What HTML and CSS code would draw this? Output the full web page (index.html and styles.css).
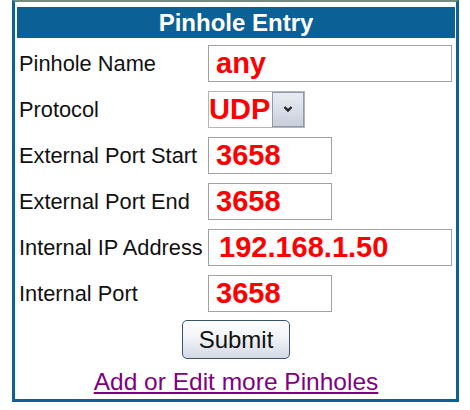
FILE: index.html
```html
<!DOCTYPE html>
<html>
<head>
<meta charset="utf-8">
<link rel="stylesheet" href="styles.css">
</head>
<body>
<div class="panel">
  <div class="header">Pinhole Entry</div>
  <form class="form">
    <label class="label">Pinhole Name</label>
    <div class="field"><input class="input long" type="text" value="any"></div>
    <label class="label">Protocol</label>
    <div class="field">
      <div class="select">
        <span class="select-value">UDP</span>
        <span class="select-btn"><svg width="12" height="8" viewBox="0 0 12 8"><polyline points="2.5,2 6,5.5 9.5,2" fill="none" stroke="#222222" stroke-width="2.4"/></svg></span>
      </div>
    </div>
    <label class="label">External Port Start</label>
    <div class="field"><input class="input short" type="text" value="3658"></div>
    <label class="label">External Port End</label>
    <div class="field"><input class="input short" type="text" value="3658"></div>
    <label class="label">Internal IP Address</label>
    <div class="field"><input class="input long ip" type="text" value="192.168.1.50"></div>
    <label class="label">Internal Port</label>
    <div class="field"><input class="input short" type="text" value="3658"></div>
  </form>
  <div class="actions">
    <button class="submit" type="button">Submit</button>
  </div>
  <div class="link-row"><a class="link" href="#">Add or Edit more Pinholes</a></div>
</div>
</body>
</html>
```
FILE: styles.css
```css
body {
  margin: 0;
  background: #ffffff;
  font-family: "Liberation Sans", Arial, sans-serif;
}

.panel {
  box-sizing: border-box;
  width: 447px;
  margin-left: 12px;
  border: 3px solid #0d6196;
  border-top: 2px solid #6f8c82;
  padding: 5px 1px 3px 2px;
  background: #ffffff;
}

.header {
  height: 31px;
  line-height: 31px;
  background: #0b6096;
  color: #ffffff;
  font-weight: bold;
  font-size: 24px;
  text-align: center;
}

.form {
  display: grid;
  grid-template-columns: 191px 1fr;
  grid-auto-rows: 46px;
  align-items: center;
  margin: 2px 0 0 0;
}

.label {
  padding: 2px 0 0 2px;
  font-size: 21.8px;
  color: #111111;
  white-space: nowrap;
}

.field {
  display: flex;
  align-items: center;
}

.input {
  box-sizing: border-box;
  height: 37px;
  margin: 0;
  border: 1px solid #a2a2a2;
  padding: 0 0 0 7px;
  background: #ffffff;
  color: #ff0000;
  font-family: "Liberation Sans", Arial, sans-serif;
  font-weight: bold;
  font-size: 29px;
  outline: none;
}

.short { width: 124px; }
.long { width: 244px; }
.ip { padding-left: 10px; }

.select {
  box-sizing: border-box;
  display: flex;
  align-items: center;
  width: 97px;
  height: 37px;
  border: 1px solid #b5b5b5;
  background: #ffffff;
}

.select-value {
  color: #ff0000;
  font-weight: bold;
  font-size: 29px;
  line-height: 35px;
}

.select-btn {
  box-sizing: border-box;
  display: flex;
  align-items: center;
  justify-content: center;
  width: 32px;
  height: 35px;
  margin-left: auto;
  border: 1px solid #8e9ab0;
  background: linear-gradient(#e9ecf2, #c9cfdb);
}

.actions {
  display: flex;
  justify-content: center;
  margin-top: 4px;
}

.submit {
  box-sizing: border-box;
  width: 108px;
  height: 39px;
  border: 1px solid #3a5372;
  border-radius: 5px;
  background: linear-gradient(#ffffff, #f1f3f7 45%, #d3d8e4);
  color: #111111;
  font-family: "Liberation Sans", Arial, sans-serif;
  font-size: 24px;
  padding: 0;
}

.link-row {
  text-align: center;
  margin-top: 9px;
  font-size: 24.5px;
}

.link {
  color: #800080;
  text-decoration: underline;
}
```
